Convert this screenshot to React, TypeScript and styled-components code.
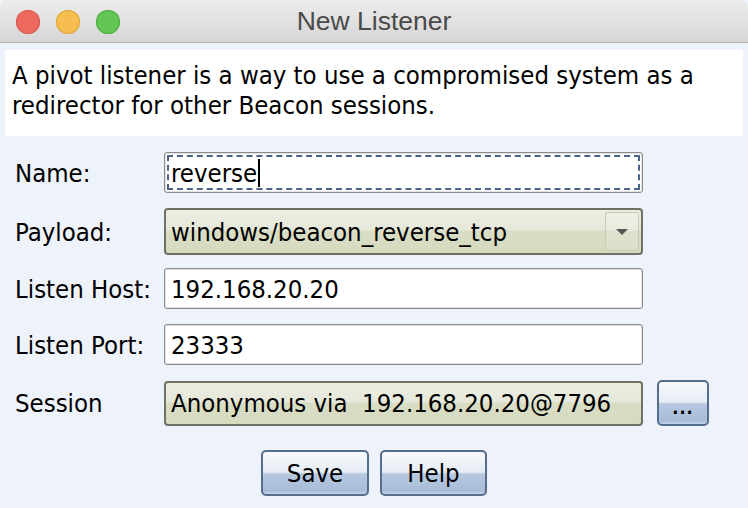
import React from "react";
import styled, { createGlobalStyle } from "styled-components";

const Global = createGlobalStyle`
  html, body { margin: 0; padding: 0; background: #eef2fa; }
  body { width: 748px; height: 508px; overflow: hidden; }
`;

const FONT = `"DejaVu Sans Condensed", "DejaVu Sans", sans-serif`;
const FS = "25.5px";

const Window = styled.div`
  width: 748px;
  height: 508px;
  display: flex;
  flex-direction: column;
  background: #eef2fa;
  font-family: ${FONT};
  color: #000;
`;

const TitleBar = styled.div`
  height: 43px;
  flex: none;
  position: relative;
  display: flex;
  align-items: center;
  justify-content: center;
  background: linear-gradient(#ececec, #d6d6d6);
  border-bottom: 1px solid #b4b4b4;
  border-radius: 8px 8px 0 0;
  box-sizing: border-box;
`;

const Lights = styled.div`
  position: absolute;
  left: 16px;
  top: 10px;
  display: flex;
  gap: 16px;
`;

const Light = styled.span<{ $c: string; $b: string }>`
  width: 24px;
  height: 24px;
  border-radius: 50%;
  background: ${(p) => p.$c};
  box-shadow: inset 0 0 0 1px ${(p) => p.$b};
`;

const Title = styled.div`
  font-family: "Liberation Sans", sans-serif;
  font-size: 26.5px;
  color: #4a4a4a;
  margin-top: 1px;
`;

const Body = styled.div`
  flex: 1;
  display: flex;
  flex-direction: column;
  padding: 7px 5px 0 5px;
`;

const Description = styled.div`
  background: #fff;
  height: 86px;
  box-sizing: border-box;
  padding: 10px 7px 0 7px;
  font-size: ${FS};
  line-height: 30px;
`;

const Form = styled.div`
  display: grid;
  grid-template-columns: 149px 479px 66px;
  padding: 16px 0 0 10px;
  align-items: center;
`;

const Label = styled.div<{ $h: number; $mb: number }>`
  font-size: ${FS};
  height: ${(p) => p.$h}px;
  margin-bottom: ${(p) => p.$mb}px;
  display: flex;
  align-items: center;
`;

const TextField = styled.div<{ $focus?: boolean; $mb: number }>`
  height: 41px;
  margin-bottom: ${(p) => p.$mb}px;
  box-sizing: border-box;
  border: 1px solid #8a8a8a;
  border-radius: 3px;
  background: #fff;
  box-shadow: inset 0 0 0 1px #e2e2e2;
  font-size: ${FS};
  display: flex;
  align-items: center;
  padding: 0 6px;
  position: relative;
  ${(p) =>
    p.$focus
      ? `
    &::after {
      content: "";
      position: absolute;
      inset: 2px;
      border: 2px dashed #4a6487;
      border-radius: 1px;
    }
  `
      : ""}
`;

const Caret = styled.span`
  display: inline-block;
  width: 2px;
  height: 28px;
  background: #000;
  margin-left: 1px;
`;

const Combo = styled.div<{ $h: number; $mb: number }>`
  height: ${(p) => p.$h}px;
  margin-bottom: ${(p) => p.$mb}px;
  box-sizing: border-box;
  border: 2px solid #6f7164;
  border-radius: 4px;
  background: linear-gradient(#eceee2 0%, #e6e8da 45%, #d9ddc4 50%, #d6dabf 100%);
  font-size: ${FS};
  display: flex;
  align-items: center;
  padding: 0 0 0 5px;
`;

const ComboText = styled.span`
  flex: 1;
  white-space: pre;
`;

const Arrow = styled.div`
  width: 34px;
  align-self: stretch;
  margin: 2px;
  box-sizing: border-box;
  border: 1px solid #c8cbb8;
  border-radius: 2px;
  background: linear-gradient(#eef0e6 0%, #e9ebde 45%, #dfe2cd 50%, #dcdfc8 100%);
  display: flex;
  align-items: center;
  justify-content: center;
`;

const Button = styled.div<{ $w: number; $h: number }>`
  width: ${(p) => p.$w}px;
  height: ${(p) => p.$h}px;
  box-sizing: border-box;
  border: 2px solid #566e8e;
  border-radius: 5px;
  background: linear-gradient(#f7f9fc 0%, #e6ecf5 48%, #b7c9e1 52%, #a9bcd7 92%, #c5d3e6 100%);
  display: flex;
  align-items: center;
  justify-content: center;
  font-size: ${FS};
`;

const SideCell = styled.div`
  display: flex;
  justify-content: flex-end;
  align-self: start;
`;

const Buttons = styled.div`
  display: flex;
  justify-content: center;
  gap: 11px;
  padding: 24px 0 0 0;
`;

const Dots = styled.span`
  font-weight: bold;
  font-size: 18px;
  letter-spacing: 1px;
  margin-top: 8px;
`;

export default function App() {
  return (
    <Window>
      <Global />
      <TitleBar>
        <Lights>
          <Light $c="#ee6a5f" $b="#d85a4f" />
          <Light $c="#f6be4f" $b="#dea53a" />
          <Light $c="#62c655" $b="#50a944" />
        </Lights>
        <Title>New Listener</Title>
      </TitleBar>
      <Body>
        <Description>
          A pivot listener is a way to use a compromised system as a
          <br />
          redirector for other Beacon sessions.
        </Description>
        <Form>
          <Label $h={41} $mb={15}>Name:</Label>
          <TextField $focus $mb={15}>
            reverse<Caret />
          </TextField>
          <div />

          <Label $h={47} $mb={13}>Payload:</Label>
          <Combo $h={47} $mb={13}>
            <ComboText>windows/beacon_reverse_tcp</ComboText>
            <Arrow>
              <svg width="14" height="8" viewBox="0 0 14 8">
                <path d="M1 1 H13 L7 7 Z" fill="#555" />
              </svg>
            </Arrow>
          </Combo>
          <div />

          <Label $h={41} $mb={15}>Listen Host:</Label>
          <TextField $mb={15}>192.168.20.20</TextField>
          <div />

          <Label $h={41} $mb={15}>Listen Port:</Label>
          <TextField $mb={15}>23333</TextField>
          <div />

          <Label $h={45} $mb={0}>Session</Label>
          <Combo $h={45} $mb={0}>
            <ComboText>{"Anonymous via  192.168.20.20@7796"}</ComboText>
          </Combo>
          <SideCell>
            <Button $w={52} $h={46}>
              <Dots>...</Dots>
            </Button>
          </SideCell>
        </Form>
        <Buttons>
          <Button $w={108} $h={46}>Save</Button>
          <Button $w={107} $h={46}>Help</Button>
        </Buttons>
      </Body>
    </Window>
  );
}
